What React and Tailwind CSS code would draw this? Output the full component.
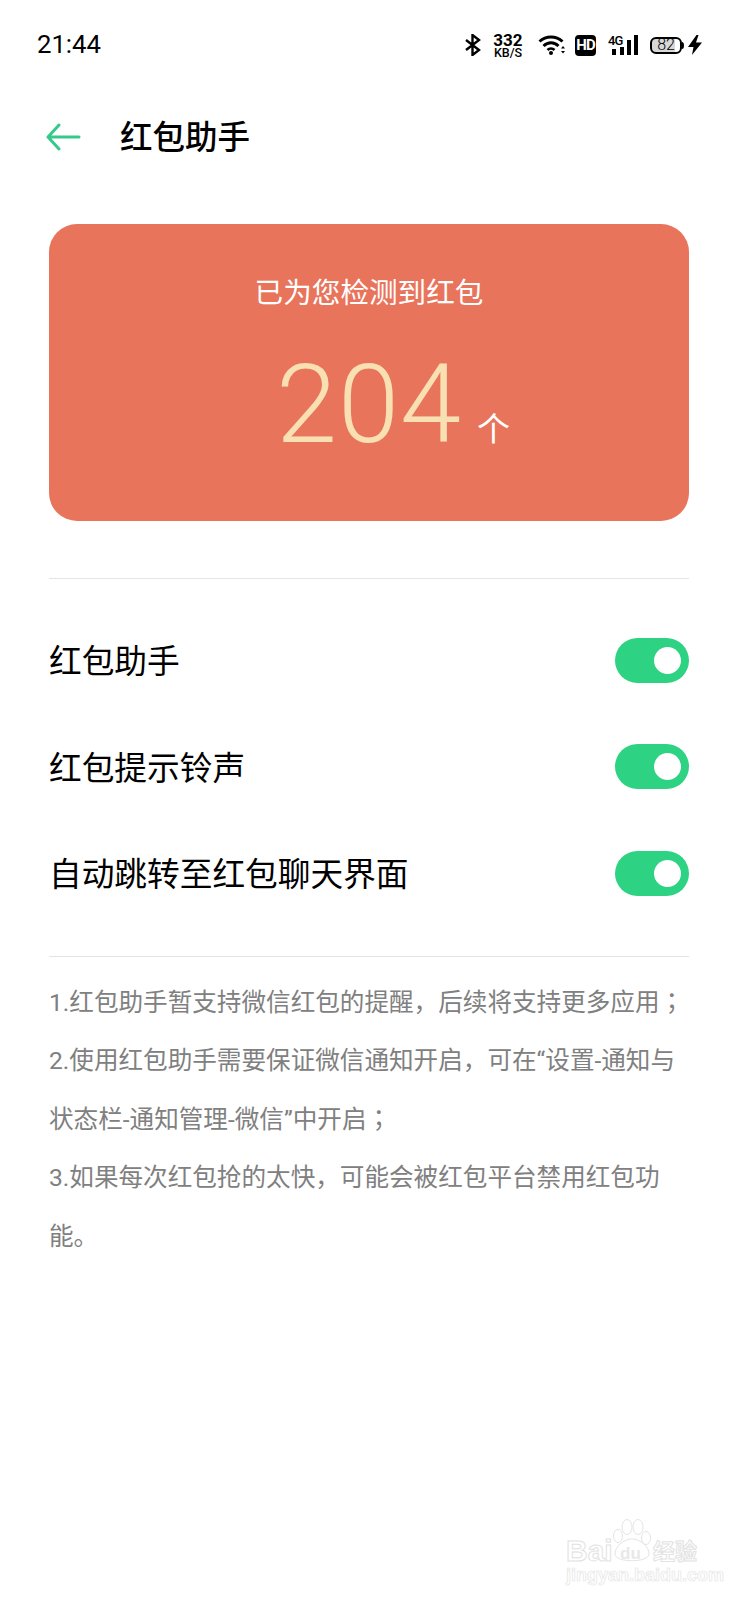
const Toggle = () => (
  <div className="flex h-[45px] w-[74px] items-center justify-end rounded-full bg-[#2dd282] pr-[8px]">
    <div className="h-[27px] w-[27px] rounded-full bg-white" />
  </div>
);

const SettingRow = ({ label }) => (
  <div className="flex h-[106.5px] items-center justify-between">
    <span className="mt-[5px] text-[32.7px] leading-none text-black">{label}</span>
    <Toggle />
  </div>
);

// the reference draws this semicolon centred in its cell, as the TC face does
const Semi = () => <span className="font-['Noto_Sans_CJK_TC'] leading-none">；</span>;

const StatusIcons = () => (
  <div className="flex items-center">
    {/* bluetooth */}
    <svg width="18" height="22" viewBox="0 0 18 22" fill="none" stroke="#000" strokeWidth="2.4">
      <path d="M2 6l13 10-6.5 5V1L15 6 2 16" />
    </svg>
    <div className="ml-[11px] flex w-[30px] flex-col items-center font-['Roboto'] font-bold text-black">
      <span className="text-[17px] leading-[14px]">332</span>
      <span className="mt-[1px] text-[12.5px] leading-[10px] font-medium">KB/S</span>
    </div>
    {/* wifi */}
    <svg width="28" height="20" viewBox="0 0 28 20" fill="none" className="ml-[15px]">
      <path d="M1.5 6.5C8 0.5 18 0.5 24.5 6.5" stroke="#000" strokeWidth="3" />
      <path d="M5.5 11C10 6.8 16 6.8 20.5 11" stroke="#000" strokeWidth="3" />
      <path d="M9.5 15C11.5 13 14.5 13 16.5 15" stroke="#000" strokeWidth="2.6" />
      <circle cx="13" cy="18" r="2" fill="#000" />
      <path d="M23 13.5l2-2.5 2 2.5zM23 16l2 2.5 2-2.5z" fill="#000" />
    </svg>
    <div className="ml-[9px] flex h-[21px] w-[21px] items-center justify-center rounded-[4px] bg-black font-['Roboto'] text-[15px] leading-none font-bold tracking-[-1px] text-white">
      HD
    </div>
    <div className="relative ml-[12px] h-[20px] w-[30px]">
      <span className="absolute top-[-1px] left-0 font-['Roboto'] text-[13px] leading-none font-medium tracking-[-1px] text-black">4G</span>
      <svg width="30" height="20" viewBox="0 0 30 20" fill="#000">
        <rect x="4" y="14" width="4" height="6" />
        <rect x="12" y="12" width="4" height="8" />
        <rect x="19" y="5" width="4" height="15" />
        <rect x="26" y="0" width="4" height="20" />
      </svg>
    </div>
    <div className="ml-[12px] flex h-[17px] w-[32px] items-center justify-center rounded-[6px] border-2 border-black bg-[linear-gradient(90deg,#d8d8d8_82%,#fff_82%)] font-['Roboto'] text-[16px] leading-none font-light text-black">
      82
    </div>
    <svg width="2" height="7" viewBox="0 0 2 7" fill="#000"><path d="M0 0a2 3.5 0 0 1 0 7z" /></svg>
    <svg width="14" height="20" viewBox="0 0 14 20" fill="#000" className="ml-[4px]">
      <path d="M8.5 0L0 12h5.5L4 20 14 7.5H8L10.5 0z" />
    </svg>
  </div>
);

const Watermark = () => (
  <div className="absolute top-[1518px] left-[566px] h-[70px] w-[134px] font-['Liberation_Sans',sans-serif] text-white">
    <svg width="50" height="48" viewBox="0 0 50 48" fill="none" stroke="#e4e4e4" strokeWidth="1" className="absolute top-0 left-[46px]">
      <ellipse cx="15" cy="9" rx="5" ry="7.5" />
      <ellipse cx="26" cy="9" rx="5" ry="7.5" />
      <ellipse cx="6" cy="18" rx="4.5" ry="6.5" />
      <ellipse cx="34" cy="20" rx="4.5" ry="6.5" />
      <path d="M3 36c0-8 9-15 17-15s17 7 17 15c0 9-34 9-34 0z" />
    </svg>
    <span className="absolute top-[18px] left-0 text-[30px] leading-none font-bold [-webkit-text-stroke:1px_#e2e2e2]">Bai</span>
    <span className="absolute top-[27px] left-[54px] text-[17px] leading-none font-bold text-[#e8e8e8]">du</span>
    <span className="absolute top-[20px] left-[87px] font-['Noto_Sans_CJK_SC'] text-[22px] leading-none font-bold [-webkit-text-stroke:1px_#e2e2e2]">经验</span>
    <span className="absolute top-[48px] left-0 text-[18px] leading-none font-bold [-webkit-text-stroke:0.7px_#e6e6e6]">jingyan.baidu.com</span>
  </div>
);

export default function App() {
  return (
    <div className="relative h-[1600px] w-[738px] overflow-hidden bg-white font-['Roboto','Noto_Sans_CJK_SC',sans-serif]">
      {/* status bar */}
      <div className="flex h-[90px] items-center justify-between pr-[36px] pl-[37px]">
        <span className="text-[25.7px] leading-none text-black">21:44</span>
        <StatusIcons />
      </div>

      {/* header */}
      <div className="flex h-[94px] items-center pl-[46px]">
        <svg width="35" height="28" viewBox="0 0 35 28" fill="none" stroke="#35c98a" strokeWidth="3" strokeLinecap="round" strokeLinejoin="round">
          <path d="M33 14H2M13 2L2 14l11 12" />
        </svg>
        <h1 className="mt-[2px] ml-[39px] text-[32.5px] leading-none font-medium text-black">红包助手</h1>
      </div>

      <div className="mt-[40px] px-[49px]">
        {/* count card */}
        <div className="flex h-[297px] flex-col items-center rounded-[28px] bg-[#e9745c]">
          <p className="mt-[52px] text-[28.6px] leading-[34px] text-white">已为您检测到红包</p>
          <div className="mt-[40px] ml-[48px] flex items-end">
            <span className="text-[110px] leading-[110px] font-light tracking-[1px] text-[#f9e0b2]">204</span>
            <span className="mb-[14px] ml-[15px] text-[33px] leading-none text-white">个</span>
          </div>
        </div>

        <div className="mt-[57px] h-px bg-[#e4e4e4]" />

        <div className="mt-[28px]">
          <SettingRow label="红包助手" />
          <SettingRow label="红包提示铃声" />
          <SettingRow label="自动跳转至红包聊天界面" />
        </div>

        <div className="mt-[29px] h-px bg-[#e4e4e4]" />

        <div className="mt-[17px] text-[24.6px] leading-[58.5px] text-[#808080]">
          <p>1.红包助手暂支持微信红包的提醒，后续将支持更多应用<Semi /></p>
          <p>2.使用红包助手需要保证微信通知开启，可在“设置-通知与状态栏-通知管理-微信”中开启<Semi /></p>
          <p>3.如果每次红包抢的太快，可能会被红包平台禁用红包功能。</p>
        </div>
      </div>

      <Watermark />
    </div>
  );
}
